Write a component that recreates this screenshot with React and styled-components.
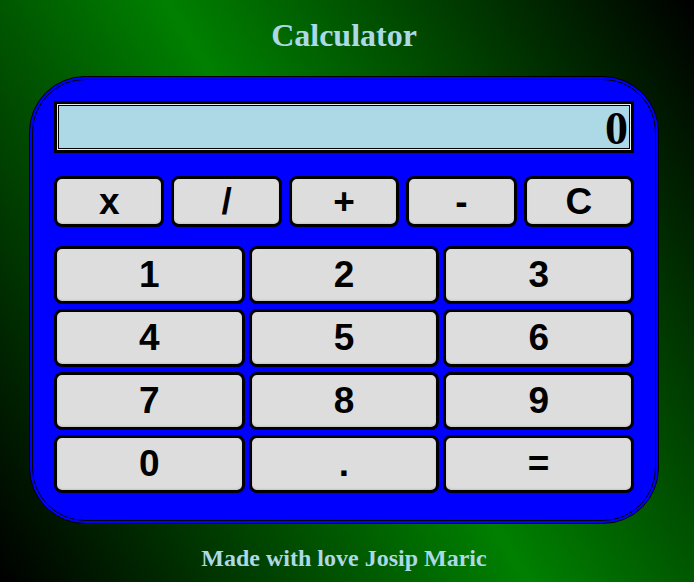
import React, { useState } from 'react';
import styled, { createGlobalStyle } from 'styled-components';

const GlobalStyle = createGlobalStyle`
	html, body {
		margin: 0;
		padding: 0;
		height: 100%;
	}
	body {
		font-family: 'Liberation Serif', 'Times New Roman', serif;
	}
`;

const Page = styled.div`
	min-height: 100vh;
	box-sizing: border-box;
	padding: 17px 6px 0 0;
	display: flex;
	flex-direction: column;
	align-items: center;
	background: linear-gradient(58deg, #000 0%, #008000 50%, #000 100%);
	& > h1 {
		margin: 0 0 23px;
		font-size: 32px;
		line-height: 36px;
		font-weight: 700;
		color: #add8e6;
	}
	& > h2 {
		margin: 20px 0 0;
		font-size: 24px;
		line-height: 28px;
		font-weight: 700;
		color: #add8e6;
	}
`;

const CalcBody = styled.div`
	width: 630px;
	box-sizing: border-box;
	padding: 21px 21px 27px;
	background-color: #0000ff;
	border: 4px double #000;
	border-radius: 56px;
	display: flex;
	flex-direction: column;
`;

const Display = styled.div`
	height: 52px;
	box-sizing: border-box;
	border: 3px solid #000;
	box-shadow: inset 0 0 0 1px #e4eef2, inset 0 0 0 2px #000;
	background-color: #add8e6;
	padding: 0 3px;
	text-align: right;
	font-family: 'Liberation Serif', 'Times New Roman', serif;
	font-size: 46px;
	font-weight: 700;
	line-height: 50px;
	color: #000;
	overflow: hidden;
`;

const OpRow = styled.div`
	margin-top: 23px;
	display: grid;
	grid-template-columns: repeat(5, 1fr);
	column-gap: 7px;
`;

const NumGrid = styled.div`
	margin-top: 19px;
	display: grid;
	grid-template-columns: repeat(3, 1fr);
	column-gap: 4px;
	row-gap: 5px;
`;

const Key = styled.button`
	height: ${(p) => (p.$op ? '51px' : '58px')};
	padding: 0;
	border: 3px solid #000;
	border-radius: 8px;
	background-color: #dddddd;
	box-shadow: inset 0 -1px 2px rgba(0, 0, 0, 0.12);
	font-family: 'Liberation Sans', Arial, sans-serif;
	font-size: 37px;
	font-weight: 700;
	color: #000;
	cursor: pointer;
	outline: 0;
`;

const ops = ['x', '/', '+', '-', 'C'];
const nums = ['1', '2', '3', '4', '5', '6', '7', '8', '9', '0', '.', '='];

const App = () => {
	const [value, setValue] = useState('0');

	const press = (k) => {
		if (k === 'C') return setValue('0');
		if (k === '=') {
			try {
				// eslint-disable-next-line no-new-func
				const r = Function(`return (${value.replace(/x/g, '*')})`)();
				return setValue(String(r));
			} catch (e) {
				return setValue('0');
			}
		}
		setValue((v) => (v === '0' && k !== '.' ? k : v + k));
	};

	return (
		<>
			<GlobalStyle />
			<Page>
				<h1>Calculator</h1>
				<CalcBody>
					<Display>{value}</Display>
					<OpRow>
						{ops.map((o) => (
							<Key key={o} $op onClick={() => press(o)}>
								{o}
							</Key>
						))}
					</OpRow>
					<NumGrid>
						{nums.map((n) => (
							<Key key={n} onClick={() => press(n)}>
								{n}
							</Key>
						))}
					</NumGrid>
				</CalcBody>
				<h2>Made with love Josip Maric</h2>
			</Page>
		</>
	);
};

export default App;
